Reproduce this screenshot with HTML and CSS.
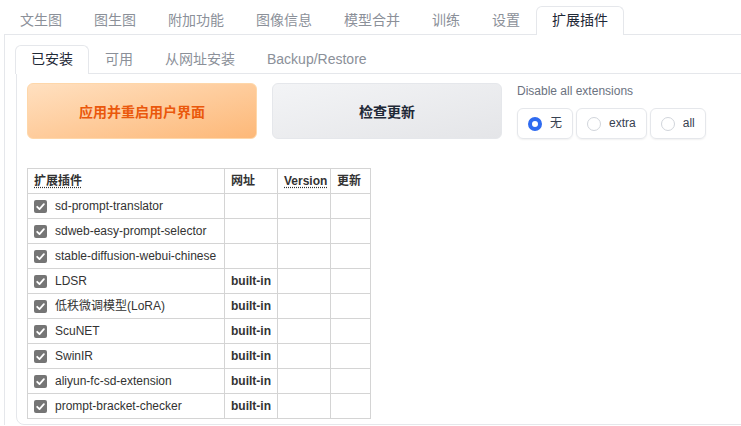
FILE: index.html
```html
<!DOCTYPE html>
<html lang="zh-CN">
<head>
    <meta charset="UTF-8">
    <title>扩展插件</title>
    <link rel="stylesheet" href="styles.css">
</head>
<body>
    <div class="app">
        <nav class="tabs">
            <button class="tab">文生图</button>
            <button class="tab">图生图</button>
            <button class="tab">附加功能</button>
            <button class="tab">图像信息</button>
            <button class="tab">模型合并</button>
            <button class="tab">训练</button>
            <button class="tab">设置</button>
            <button class="tab selected">扩展插件</button>
        </nav>

        <div class="panel">
            <nav class="tabs">
                <button class="tab selected">已安装</button>
                <button class="tab">可用</button>
                <button class="tab">从网址安装</button>
                <button class="tab">Backup/Restore</button>
            </nav>

            <div class="subpanel">
                <div class="actions">
                    <button class="btn btn-primary">应用并重启用户界面</button>
                    <button class="btn btn-secondary">检查更新</button>
                    <div class="radio-block">
                        <div class="radio-label">Disable all extensions</div>
                        <div class="radio-group">
                            <label class="radio-option"><span class="radio checked"></span>无</label>
                            <label class="radio-option"><span class="radio"></span>extra</label>
                            <label class="radio-option"><span class="radio"></span>all</label>
                        </div>
                    </div>
                </div>

                <table class="ext-table">
                    <thead>
                        <tr>
                            <th class="col-name"><abbr>扩展插件</abbr></th>
                            <th class="col-url">网址</th>
                            <th class="col-ver"><abbr>Version</abbr></th>
                            <th class="col-upd">更新</th>
                        </tr>
                    </thead>
                    <tbody id="rows"></tbody>
                </table>
            </div>
        </div>
    </div>

    <script>
        const extensions = [
            ['sd-prompt-translator', ''],
            ['sdweb-easy-prompt-selector', ''],
            ['stable-diffusion-webui-chinese', ''],
            ['LDSR', 'built-in'],
            ['低秩微调模型(LoRA)', 'built-in'],
            ['ScuNET', 'built-in'],
            ['SwinIR', 'built-in'],
            ['aliyun-fc-sd-extension', 'built-in'],
            ['prompt-bracket-checker', 'built-in'],
        ];
        const check = '<svg class="check" width="13" height="13" viewBox="0 0 13 13"><rect width="13" height="13" rx="2" fill="#757575"/><path d="M3.2 6.8l2.3 2.3L9.9 4.2" fill="none" stroke="#fff" stroke-width="1.8" stroke-linecap="round" stroke-linejoin="round"/></svg>';
        document.getElementById('rows').innerHTML = extensions.map(([name, url]) =>
            `<tr><td><label class="ext-name">${check}${name}</label></td><td class="url">${url}</td><td></td><td></td></tr>`
        ).join('');
    </script>
</body>
</html>
```

FILE: styles.css
```css
:root {
    --border: #e5e7eb;
    --grid: #d4d4d4;
    --text: #1f2937;
    --muted: #8b9099;
    --font: 'Liberation Sans', 'Noto Sans CJK SC', sans-serif;
}

body {
    margin: 0;
    background: #fff;
    color: var(--text);
    font-family: var(--font);
    overflow: hidden;
}

.app {
    width: 820px;
    padding: 6px 0 0 4px;
}

.tabs {
    display: flex;
    margin-bottom: -1px;
    position: relative;
    z-index: 1;
}

.tab {
    font-family: var(--font);
    font-size: 14px;
    line-height: 17px;
    padding: 5px 15px 6px;
    border: 1px solid transparent;
    border-bottom: none;
    border-radius: 6px 6px 0 0;
    background: none;
    color: var(--muted);
    cursor: pointer;
}

.tab.selected {
    background: #fff;
    border-color: var(--border);
    color: var(--text);
}

.panel {
    border: 1px solid var(--border);
    border-bottom: none;
    padding: 10px 11px 0;
}

.panel .tabs {
    margin-left: -1px;
}

.subpanel {
    border: 1px solid var(--border);
    border-radius: 0 0 8px 8px;
    padding: 9px 10px 5px;
}

.actions {
    display: grid;
    grid-template-columns: 230px 230px 230px;
    gap: 15px;
}

.btn {
    height: 56px;
    border-radius: 6px;
    font-family: var(--font);
    font-size: 14px;
    font-weight: bold;
    cursor: pointer;
}

.btn-primary {
    background: linear-gradient(to bottom right, #ffe0c0, #fdb878);
    border: 1px solid #fed7aa;
    color: #ea580c;
}

.btn-secondary {
    background: linear-gradient(to bottom right, #f3f4f6, #e4e5e8);
    border: 1px solid var(--border);
    color: var(--text);
}

.radio-label {
    font-size: 12px;
    line-height: 16px;
    color: #6b7280;
    margin-bottom: 9px;
}

.radio-group {
    display: flex;
    gap: 3px;
}

.radio-option {
    display: flex;
    align-items: center;
    gap: 8px;
    padding: 7px 10px;
    font-size: 12px;
    line-height: 15px;
    border: 1px solid var(--border);
    border-radius: 6px;
    box-shadow: 0 1px 2px rgba(0, 0, 0, 0.06);
    color: #374151;
}

.radio {
    width: 14px;
    height: 14px;
    box-sizing: border-box;
    border: 1px solid #d1d5db;
    border-radius: 50%;
    background: #fff;
}

.radio.checked {
    border: 4px solid #2f6bf0;
}

.ext-table {
    margin-top: 29px;
    border-collapse: collapse;
    table-layout: fixed;
    width: 343px;
    font-size: 12px;
    color: #333;
}

.ext-table th,
.ext-table td {
    border: 1px solid var(--grid);
    padding: 4px 6px;
    line-height: 16px;
    text-align: left;
    white-space: nowrap;
    overflow: hidden;
}

.ext-table th {
    font-weight: bold;
}

.col-name { width: 184px; }
.col-url { width: 40px; }
.col-ver { width: 40px; }
.col-upd { width: 27px; }

abbr {
    text-decoration: underline dotted;
    text-underline-offset: 2px;
}

.ext-name {
    display: flex;
    align-items: center;
    gap: 8px;
}

.check {
    flex: none;
}

.url {
    font-weight: bold;
}
```
